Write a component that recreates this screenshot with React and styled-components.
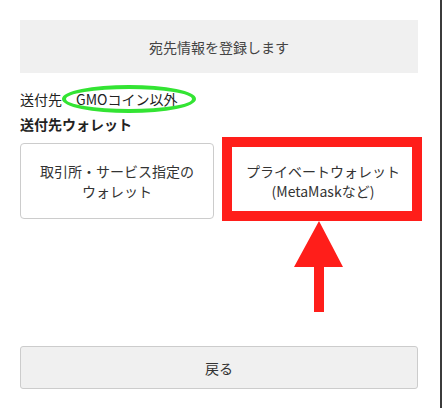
import React from 'react';
import styled, { createGlobalStyle } from 'styled-components';

const GlobalStyle = createGlobalStyle`
    html, body {
        margin: 0;
        padding: 0;
        background: #ffffff;
    }
    body {
        font-family: "Noto Sans CJK JP", "Noto Sans", sans-serif;
        color: #333333;
    }
`;

const Modal = styled.div`
    box-sizing: border-box;
    width: 442px;
    height: 408px;
    padding: 20px 22px 19px 20px;
    border-right: 2px solid #3b3b3b;
    display: flex;
    flex-direction: column;
`;

const Heading = styled.div`
    height: 53px;
    background: #f0f0f0;
    display: flex;
    align-items: center;
    justify-content: center;
    font-size: 14px;
    color: #444444;
`;

const Line = styled.div`
    font-size: 14px;
    line-height: 25px;
    font-weight: ${p => (p.bold ? 700 : 400)};
    margin-top: ${p => p.top || 0}px;
    color: #222222;
`;

// green hand-drawn circle around the note
const Circled = styled.span`
    position: relative;
    &::after {
        content: '';
        position: absolute;
        left: -14px;
        right: -19px;
        top: -4px;
        bottom: -4px;
        border: 4px solid #33e433;
        border-radius: 50%;
    }
`;

const Cards = styled.div`
    display: grid;
    grid-template-columns: 194px 194px;
    column-gap: 12px;
    margin-top: 6px;
`;

const Card = styled.div`
    position: relative;
    box-sizing: border-box;
    height: 76px;
    border: 1px solid ${p => (p.marked ? 'transparent' : '#cccccc')};
    border-radius: 4px;
    display: flex;
    align-items: center;
    justify-content: center;
    text-align: center;
    font-size: 14px;
    line-height: 20px;
    color: #333333;

    ${p => p.marked && `
        &::after {
            content: '';
            position: absolute;
            left: -5px;
            right: -3px;
            top: -7px;
            bottom: -3px;
            border: 10px solid #ff1e1a;
        }
    `}
`;

const Arrow = styled.svg`
    position: absolute;
    left: 67px;
    top: 77px;
    overflow: visible;
`;

const BackButton = styled.button`
    margin-top: auto;
    height: 43px;
    width: 100%;
    background: #f0f0f0;
    border: 1px solid #cccccc;
    border-radius: 3px;
    font-family: inherit;
    font-size: 14px;
    color: #333333;
    padding: 0;
`;

export default function App() {
    return (
        <>
            <GlobalStyle />
            <Modal>
                <Heading>宛先情報を登録します</Heading>
                <Line top={14}>
                    送付先　<Circled>GMOコイン以外</Circled>
                </Line>
                <Line bold>送付先ウォレット</Line>
                <Cards>
                    <Card>取引所・サービス指定の<br />ウォレット</Card>
                    <Card marked>
                        プライベートウォレット<br />(MetaMaskなど)
                        <Arrow width="50" height="91" viewBox="0 0 50 91">
                            <polygon points="25,0 49,46 30,46 30,91 20,91 20,46 0,46" fill="#ff1e1a" />
                        </Arrow>
                    </Card>
                </Cards>
                <BackButton>戻る</BackButton>
            </Modal>
        </>
    );
}
